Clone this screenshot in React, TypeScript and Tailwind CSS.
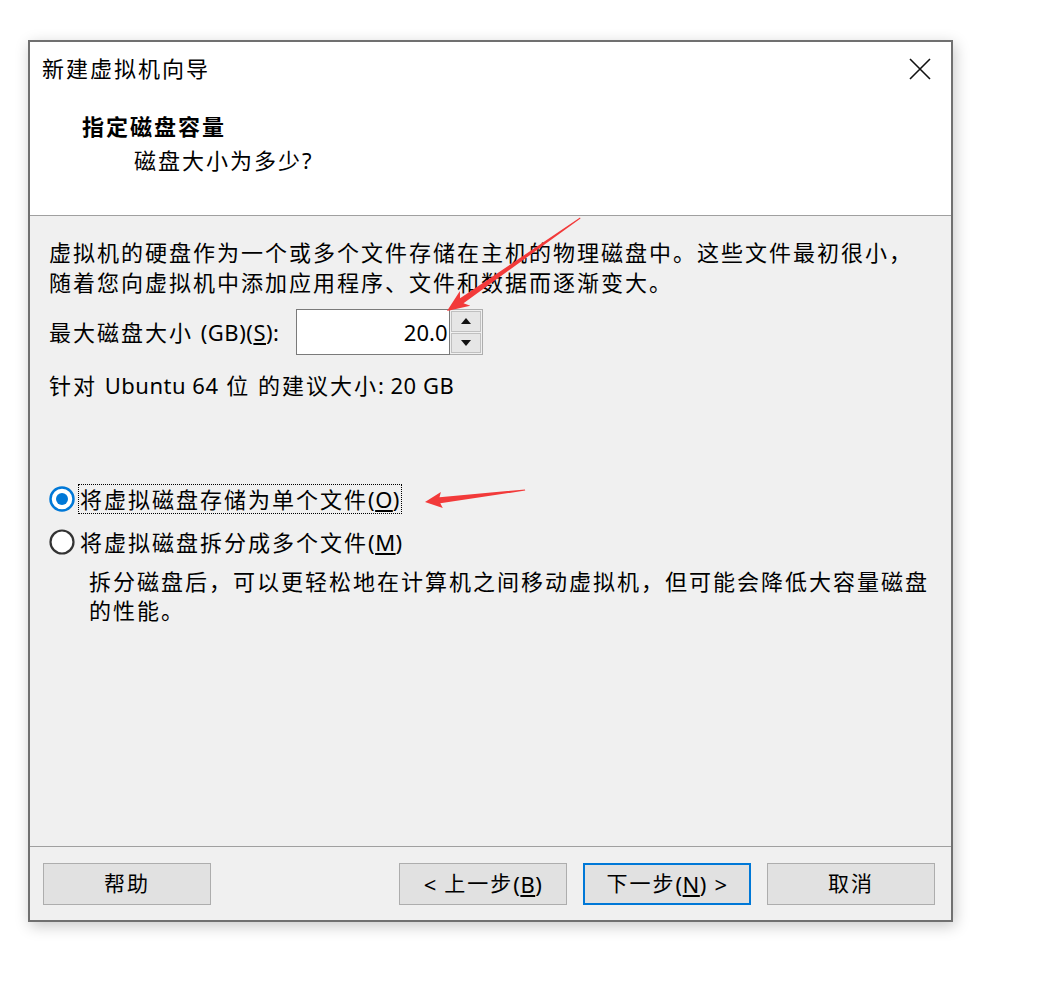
const cjk = "font-['Noto_Sans','Noto_Sans_CJK_SC',sans-serif]";

const Latin = ({ children }: { children: React.ReactNode }) => (
  <span className="text-[22px] tracking-[0.5px]">{children}</span>
);

const Key = ({ k }: { k: string }) => (
  <Latin>
    (<span className="underline underline-offset-2">{k}</span>)
  </Latin>
);

const Button = ({ children, primary }: { children: React.ReactNode; primary?: boolean }) => (
  <button
    className={
      "w-[168px] h-[42px] bg-[#e1e1e1] text-[21px] tracking-[2px] text-black flex items-center justify-center " +
      (primary ? "border-2 border-[#0078d7]" : "border border-[#adadad]")
    }
  >
    {children}
  </button>
);

const Radio = ({ checked }: { checked?: boolean }) => (
  <svg width="26" height="26" viewBox="0 0 26 26" className="shrink-0">
    {checked ? (
      <>
        <circle cx="13" cy="13" r="11.5" fill="white" stroke="#0078d7" strokeWidth="2.5" />
        <circle cx="13" cy="13" r="6" fill="#0078d7" />
      </>
    ) : (
      <circle cx="13" cy="13" r="11.5" fill="white" stroke="#333" strokeWidth="2.2" />
    )}
  </svg>
);

export default function App() {
  return (
    <div className={"relative w-[1049px] h-[993px] bg-white pt-[40px] pl-[28px] " + cjk}>
      <div className="w-[925px] h-[882px] border-2 border-[#707070] flex flex-col bg-[#f0f0f0] shadow-[2px_4px_14px_rgba(0,0,0,0.22)]">
        {/* header */}
        <div className="h-[174px] bg-white border-b border-[#a0a0a0] pl-[12px] pr-[20px]">
          <div className="flex items-center justify-between h-[53px]">
            <div className="text-[22px] tracking-[2px] text-black">新建虚拟机向导</div>
            <svg width="22" height="22" viewBox="0 0 22 22">
              <path d="M1 1 L21 21 M21 1 L1 21" stroke="#111" strokeWidth="1.6" />
            </svg>
          </div>
          <div className="ml-[40px] mt-[16px] text-[22px] tracking-[2px] font-bold leading-[30px]">指定磁盘容量</div>
          <div className="ml-[92px] mt-[4px] text-[22px] tracking-[2px] leading-[30px]">
            磁盘大小为多少<Latin>?</Latin>
          </div>
        </div>

        {/* body */}
        <div className="flex-1 pl-[19px] pt-[21px] text-[22px] tracking-[2px] text-black">
          <div className="leading-[30px]">
            虚拟机的硬盘作为一个或多个文件存储在主机的物理磁盘中。这些文件最初很小，
            <br />
            随着您向虚拟机中添加应用程序、文件和数据而逐渐变大。
          </div>
          <div className="flex items-center mt-[12px] h-[46px]">
            <span>
              最大磁盘大小 <Latin>(GB)</Latin>
              <Key k="S" />
              <Latin>:</Latin>
            </span>
            <div className="ml-[17px] flex h-[46px]">
              <div className="w-[154px] h-[46px] bg-white border border-[#7a7a7a] flex items-center justify-end pr-[2px] text-[22px] tracking-normal">
                20.0
              </div>
              <div className="flex flex-col w-[33px] h-[46px] border border-[#adadad] border-l-0 bg-[#f0f0f0]">
                <div className="flex-1 flex items-center justify-center bg-[#e6e6e6] border border-[#c0c0c0] m-[1px] mb-0">
                  <svg width="10" height="6" viewBox="0 0 10 6">
                    <path d="M5 0 L10 6 L0 6 Z" fill="#111" />
                  </svg>
                </div>
                <div className="flex-1 flex items-center justify-center bg-[#e6e6e6] border border-[#c0c0c0] m-[1px]">
                  <svg width="10" height="6" viewBox="0 0 10 6">
                    <path d="M0 0 L10 0 L5 6 Z" fill="#111" />
                  </svg>
                </div>
              </div>
            </div>
          </div>
          <div className="mt-[15px] leading-[30px]">
            针对 <Latin>Ubuntu 64</Latin> 位 的建议大小<Latin>: 20 GB</Latin>
          </div>

          <div className="mt-[84px] flex items-center h-[30px]">
            <Radio checked />
            <span className="ml-[4px] outline-1 outline-dotted outline-black leading-[28px] px-[1px]">
              将虚拟磁盘存储为单个文件
              <Key k="O" />
            </span>
          </div>
          <div className="mt-[13px] flex items-center h-[30px]">
            <Radio />
            <span className="ml-[5px] leading-[28px]">
              将虚拟磁盘拆分成多个文件
              <Key k="M" />
            </span>
          </div>
          <div className="ml-[40px] mt-[10px] leading-[29px]">
            拆分磁盘后，可以更轻松地在计算机之间移动虚拟机，但可能会降低大容量磁盘
            <br />
            的性能。
          </div>
        </div>

        {/* footer */}
        <div className="h-[74px] border-t border-[#a0a0a0] flex items-start pt-[16px] pl-[13px] pr-[16px]">
          <Button>帮助</Button>
          <div className="flex-1" />
          <Button>
            <Latin>&lt;</Latin>&nbsp;上一步<Key k="B" />
          </Button>
          <div className="ml-[16px]">
            <Button primary>
              下一步<Key k="N" />&nbsp;<Latin>&gt;</Latin>
            </Button>
          </div>
          <div className="ml-[16px]">
            <Button>取消</Button>
          </div>
        </div>
      </div>

      {/* red annotation arrows */}
      <svg className="absolute inset-0 pointer-events-none" width="1049" height="993" viewBox="0 0 1049 993">
        <polygon
          points="447,311 459.9,291 460.1,298.2 580,217.6 580.5,218.5 463.5,303.2 470.3,305.8"
          fill="#f23a3a"
        />
        <polygon
          points="425,502 440.9,492.1 439.5,497.3 525,489.5 525.2,490.6 440.3,503.3 442.8,507.9"
          fill="#f23a3a"
        />
      </svg>
    </div>
  );
}
